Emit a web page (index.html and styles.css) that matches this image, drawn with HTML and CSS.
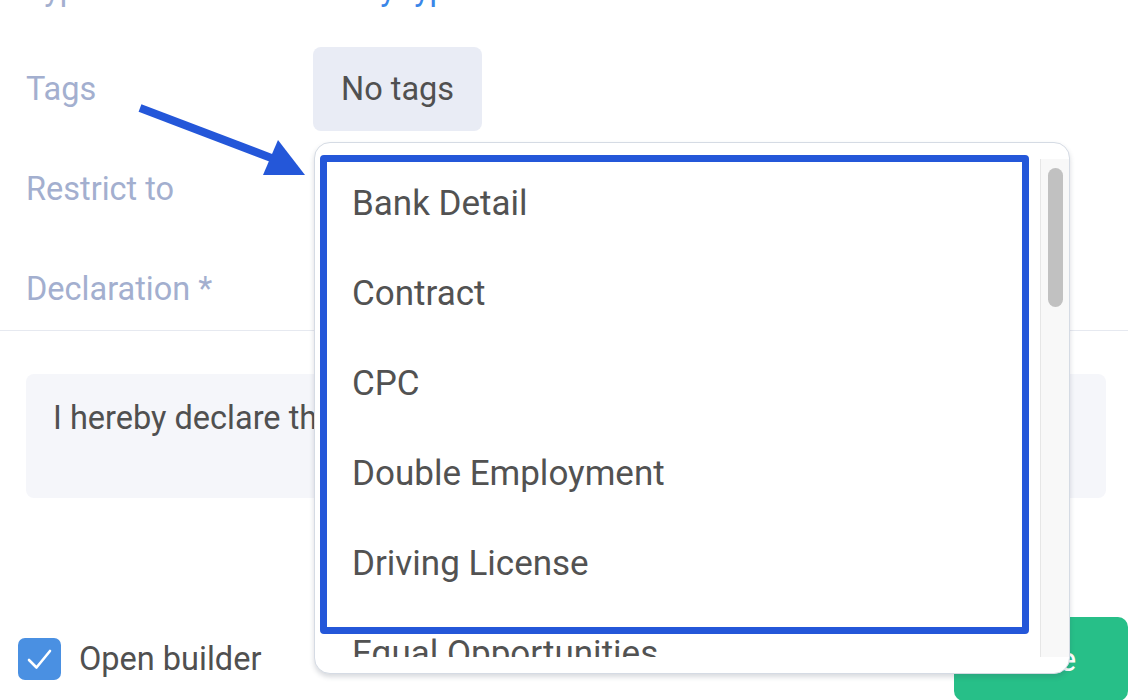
FILE: index.html
```html
<!DOCTYPE html>
<html lang="en">
<head>
    <meta charset="UTF-8">
    <title>Declaration</title>
    <link rel="stylesheet" href="styles.css">
</head>
<body>
    <div id="page">
        <div class="form">
            <div class="row">
                <div class="label">Type</div>
                <div class="value link">Any type</div>
            </div>
            <div class="row">
                <div class="label">Tags</div>
                <div class="value"><span class="chip">No tags</span></div>
            </div>
            <div class="row">
                <div class="label">Restrict to</div>
                <div class="value"></div>
            </div>
            <div class="row">
                <div class="label">Declaration *</div>
                <div class="value"></div>
            </div>
        </div>
        <div class="divider"></div>
        <div class="declaration">I hereby declare that the above information is correct.</div>
        <div class="footer">
            <label class="check">
                <span class="box">
                    <svg width="43" height="42" viewBox="0 0 43 42"><path d="M11 22 L18.5 29.5 L32 13" fill="none" stroke="#fff" stroke-width="2.6" stroke-linecap="round" stroke-linejoin="round"/></svg>
                </span>
                Open builder
            </label>
            <button class="save">Save</button>
        </div>

        <svg class="arrow" width="320" height="190" viewBox="0 0 320 190">
            <line x1="140" y1="108" x2="274" y2="159" stroke="#2457d9" stroke-width="8"/>
            <polygon points="305,175 263,175 278,140" fill="#2457d9"/>
        </svg>

        <div class="dropdown">
            <div class="scroller">
                <ul class="options">
                    <li>Bank Detail</li>
                    <li>Contract</li>
                    <li>CPC</li>
                    <li>Double Employment</li>
                    <li>Driving License</li>
                    <li>Equal Opportunities</li>
                    <li>Health Declaration</li>
                    <li>ID Document</li>
                    <li>Medical Certificate</li>
                    <li>NDA</li>
                    <li>Passport</li>
                    <li>Payroll</li>
                    <li>Pension</li>
                    <li>Right to Work</li>
                    <li>Tax Form</li>
                    <li>Training</li>
                    <li>Uniform</li>
                    <li>Visa</li>
                </ul>
                <div class="track"><div class="thumb"></div></div>
            </div>
            <div class="highlight"></div>
        </div>
    </div>
</body>
</html>
```

FILE: styles.css
```css
*{
    padding: 0;
    margin: 0;
    box-sizing: border-box;
}
ul{
    list-style: none;
}
html,body{
    height: 100%;
    overflow: hidden;
    background: #fff;
}
body{
    font-family: Roboto, "Liberation Sans", Arial, sans-serif;
    font-size: 32.5px;
    color: #505050;
}
#page{
    position: relative;
    display: flow-root;
    height: 700px;
}
.form{
    margin-top: -61px;
    margin-bottom: -9px;
}
.row{
    display: grid;
    grid-template-columns: 287px 1fr;
    align-items: center;
    height: 100px;
    padding-left: 26px;
}
.label{
    color: #a3afcf;
}
.value.link{
    padding-left: 28px;
    color: #3a86e8;
}
.chip{
    display: inline-flex;
    align-items: center;
    height: 84px;
    padding: 0 28px;
    background: #e9ecf5;
    border-radius: 8px;
}
.divider{
    height: 1px;
    background: #e6e9f0;
}
.declaration{
    margin: 43px 22px 0 26px;
    height: 124px;
    padding: 25px 27px;
    background: #f5f6fa;
    border-radius: 8px;
}
.footer{
    display: flex;
    align-items: center;
    justify-content: space-between;
    margin-top: 119px;
    padding-left: 18px;
}
.check{
    display: flex;
    align-items: center;
    gap: 18px;
}
.box{
    display: block;
    width: 43px;
    height: 42px;
    background: #4a90e2;
    border-radius: 7px;
}
.box svg{
    display: block;
}
.save{
    width: 174px;
    height: 84px;
    border: none;
    border-radius: 10px;
    background: #27bf88;
    color: #fff;
    font-family: inherit;
    font-size: 33px;
}
.arrow{
    position: absolute;
    left: 0;
    top: 0;
}
.dropdown{
    position: absolute;
    left: 314px;
    top: 142px;
    width: 756px;
    height: 532px;
    background: #fff;
    border: 1px solid #d5dbe4;
    border-radius: 16px;
    box-shadow: 0 3px 5px rgba(60, 70, 90, 0.2);
}
.scroller{
    display: flex;
    margin-top: 16px;
    height: 498px;
}
.options{
    flex: 1;
    overflow: hidden;
    padding-left: 37px;
    font-size: 35px;
    color: #525252;
}
.options li{
    height: 90px;
    line-height: 90px;
    white-space: nowrap;
}
.track{
    width: 29px;
    padding: 9px 6px 0 7px;
    background: #f8f8f8;
    border-left: 1px solid #e6e6e6;
}
.thumb{
    height: 139px;
    background: #c1c1c1;
    border-radius: 8px;
}
.highlight{
    position: absolute;
    left: 5px;
    top: 12px;
    width: 709px;
    height: 479px;
    border: 7px solid #2457d9;
    border-radius: 4px;
}
```
